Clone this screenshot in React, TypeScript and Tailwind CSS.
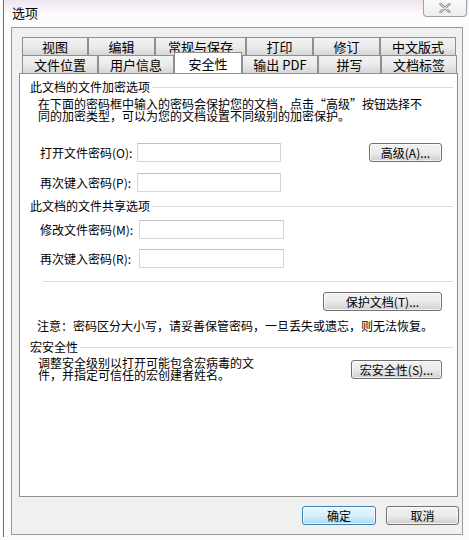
import React from "react";

const FONT = { fontFamily: '"SimSun", "Noto Sans CJK SC", "Liberation Sans", sans-serif' };

function Tab({ label, w, selected }: { label: string; w: string; selected?: boolean }) {
  if (selected) {
    return (
      <div
        className={`${w} h-[21px] -mt-[3px] -mb-[1px] relative z-10 bg-white border border-b-0 border-[#8e8f8f] flex items-center justify-center pt-[1px] text-[13px] text-black leading-none`}
      >
        {label}
      </div>
    );
  }
  return (
    <div
      className={`${w} h-[18px] bg-gradient-to-b from-[#f3f3f3] via-[#ebebeb] to-[#d6d6d6] border border-b-0 border-[#8e8f8f] flex items-center justify-center text-[13px] text-black leading-none`}
    >
      {label}
    </div>
  );
}

function Btn({ label, w, def }: { label: string; w: string; def?: boolean }) {
  return (
    <div
      className={`${w} h-[19px] rounded-[3px] border ${
        def ? "border-[#3c7fb1] bg-gradient-to-b from-[#eaf6fd] via-[#d9f0fc] to-[#a7d9f5]" : "border-[#707070] bg-gradient-to-b from-[#f2f2f2] via-[#ebebeb] to-[#cfcfcf]"
      } flex items-center justify-center text-[12px] text-black leading-none shadow-[inset_0_0_0_1px_rgba(255,255,255,0.7)]`}
    >
      {label}
    </div>
  );
}

function Input({ w }: { w: string }) {
  return <div className={`${w} h-[19px] bg-white border border-[#d7d7d7] border-t-[#c2c2c2]`} />;
}

function Heading({ label }: { label: string }) {
  return (
    <div className="flex items-center h-[14px] pl-[10px] pr-[4px]">
      <span className="text-[12px] leading-[14px] text-black whitespace-nowrap">{label}</span>
      <div className="flex-1 h-px bg-[#dcdcdc] ml-[2px]" />
    </div>
  );
}

export default function App() {
  return (
    <div className="w-[469px] h-[540px] bg-[#fbfbfb] overflow-hidden pl-[3px]" style={FONT}>
      <div className="h-[537px] border-l border-[#6e6e6e] flex flex-col">
        {/* title bar */}
        <div className="h-[27px] flex justify-between bg-gradient-to-b from-[#efe4ef] via-[#fdfbfd] to-[#fdfdfd]">
          <div className="pl-[8px] pt-[5px] text-[13px] leading-[16px] text-black">选项</div>
          <div className="w-[44px] h-[17px] mr-[2px] rounded-b-[4px] border border-t-0 border-[#9aa0a8] bg-gradient-to-b from-[#fafafa] to-[#eeeeee] flex items-center justify-center">
            <svg width="12" height="10" viewBox="0 0 12 10">
              <path d="M1.5 1 L10.5 9 M10.5 1 L1.5 9" stroke="#8a8f98" strokeWidth="2.4" strokeLinecap="round" />
              <path d="M1.5 1 L10.5 9 M10.5 1 L1.5 9" stroke="#ffffff" strokeWidth="0.8" strokeLinecap="round" />
            </svg>
          </div>
        </div>
        {/* client */}
        <div className="ml-[7px] w-[452px] h-[508px] border border-[#9a9a9a] bg-[#f0f0f0] pt-[9px]">
          <div className="ml-[7px] w-[439px]">
            {/* tabs */}
            <div className="pl-[3px] flex">
              <Tab label="视图" w="w-[66px]" />
              <Tab label="编辑" w="w-[67px]" />
              <Tab label="常规与保存" w="w-[91px]" />
              <Tab label="打印" w="w-[67px]" />
              <Tab label="修订" w="w-[67px]" />
              <Tab label="中文版式" w="w-[76px]" />
            </div>
            <div className="pl-[3px] flex">
              <Tab label="文件位置" w="w-[76px]" />
              <Tab label="用户信息" w="w-[76px]" />
              <Tab label="安全性" w="w-[68px]" selected />
              <Tab label="输出 PDF" w="w-[76px]" />
              <Tab label="拼写" w="w-[63px]" />
              <Tab label="文档标签" w="w-[76px]" />
            </div>
            {/* panel */}
            <div className="h-[424px] bg-white border border-[#8e8f8f] pt-[6px] text-[12px] text-black">
              <Heading label="此文档的文件加密选项" />
              <div className="pl-[18px] pt-[4px] leading-[12px]">
                <div>在下面的密码框中输入的密码会保护您的文档，点击“高级”按钮选择不</div>
                <div>同的加密类型，可以为您的文档设置不同级别的加密保护。</div>
              </div>
              <div className="flex items-center h-[19px] mt-[21px] pl-[20px]">
                <span className="w-[97px] whitespace-nowrap">打开文件密码(O):</span>
                <Input w="w-[144px]" />
                <div className="flex-1" />
                <div className="mr-[15px]">
                  <Btn label="高级(A)..." w="w-[73px]" />
                </div>
              </div>
              <div className="flex items-center h-[19px] mt-[11px] pl-[20px]">
                <span className="w-[97px] whitespace-nowrap">再次键入密码(P):</span>
                <Input w="w-[144px]" />
              </div>
              <div className="mt-[7px]">
                <Heading label="此文档的文件共享选项" />
              </div>
              <div className="flex items-center h-[19px] mt-[7px] pl-[20px]">
                <span className="w-[99px] whitespace-nowrap">修改文件密码(M):</span>
                <Input w="w-[145px]" />
              </div>
              <div className="flex items-center h-[19px] mt-[10px] pl-[20px]">
                <span className="w-[99px] whitespace-nowrap">再次键入密码(R):</span>
                <Input w="w-[145px]" />
              </div>
              <div className="ml-[23px] mr-[4px] h-px bg-[#dcdcdc] mt-[13px]" />
              <div className="flex justify-end pr-[15px] mt-[10px]">
                <Btn label="保护文档(T)..." w="w-[119px]" />
              </div>
              <div className="pl-[17px] mt-[8px] leading-[14px] whitespace-nowrap">
                注意：密码区分大小写，请妥善保管密码，一旦丢失或遗忘，则无法恢复。
              </div>
              <div className="mt-[7px]">
                <Heading label="宏安全性" />
              </div>
              <div className="flex items-start pl-[18px] pr-[15px] mt-[3px]">
                <div className="leading-[12px]">
                  <div>调整安全级别以打开可能包含宏病毒的文</div>
                  <div>件，并指定可信任的宏创建者姓名。</div>
                </div>
                <div className="flex-1" />
                <div className="mt-[3px]">
                  <Btn label="宏安全性(S)..." w="w-[91px]" />
                </div>
              </div>
            </div>
            {/* bottom buttons */}
            <div className="flex justify-end gap-[10px] mt-[9px] mr-[-1px]">
              <Btn label="确定" w="w-[74px]" def />
              <Btn label="取消" w="w-[73px]" />
            </div>
          </div>
        </div>
      </div>
    </div>
  );
}
